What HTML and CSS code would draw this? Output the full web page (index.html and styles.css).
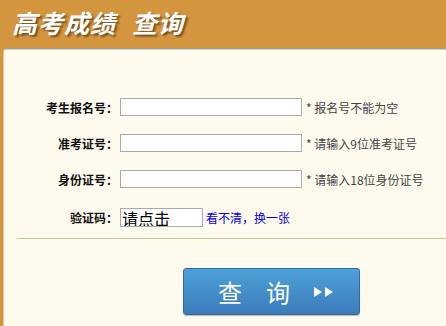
FILE: index.html
```html
<!DOCTYPE html>
<html lang="zh-CN">
<head>
    <meta charset="UTF-8">
    <title>高考成绩查询</title>
    <link rel="stylesheet" href="styles.css">
</head>
<body>
    <div class="header">
        <h1 class="title"><span>高考成绩</span><span class="title-query">查询</span></h1>
    </div>

    <div class="panel">
        <div class="row first">
            <label class="label">考生报名号：</label>
            <input type="text" class="field">
            <span class="hint">* 报名号不能为空</span>
        </div>
        <div class="row">
            <label class="label">准考证号：</label>
            <input type="text" class="field">
            <span class="hint">* 请输入9位准考证号</span>
        </div>
        <div class="row">
            <label class="label">身份证号：</label>
            <input type="text" class="field">
            <span class="hint">* 请输入18位身份证号</span>
        </div>
        <div class="row captcha">
            <label class="label">验证码：</label>
            <input type="text" class="code" value="请点击">
            <a href="#" class="refresh">看不清，换一张</a>
        </div>

        <div class="divider"></div>

        <div class="actions">
            <button class="submit">
                <span class="submit-char">查</span>
                <span class="submit-char">询</span>
                <span class="arrows"><i></i><i></i></span>
            </button>
        </div>
    </div>
</body>
</html>
```

FILE: styles.css
```css
body {
    margin: 0;
    height: 100vh;
    background-color: #d4953f;
    font-family: "Noto Sans CJK SC", "Liberation Sans", sans-serif;
    display: flex;
    flex-direction: column;
    overflow: hidden;
}

.header {
    height: 48px;
    display: flex;
    align-items: center;
    padding-left: 12px;
}

.title {
    margin: -4px 0 0 0;
    color: #ffffff;
    font-size: 25px;
    font-weight: bold;
    font-style: italic;
    line-height: 1;
    letter-spacing: 1px;
    text-shadow: 2px 2px 2px rgba(60, 30, 0, 0.6);
    display: flex;
}

.title-query {
    margin-left: 16px;
}

.panel {
    flex: 1;
    margin-left: 3px;
    background-color: #fefbee;
    border-top: 1px solid #a39c90;
    border-left: 1px solid #e0c89a;
    border-top-left-radius: 4px;
    box-shadow: inset 0 1px 0 #d8d4c8;
}

.row {
    display: flex;
    align-items: center;
    height: 36px;
}

.row.first {
    margin-top: 40px;
}

.row.captcha {
    height: 39px;
    margin-top: 1px;
}

.label {
    width: 114px;
    text-align: right;
    font-size: 12px;
    font-weight: bold;
    color: #111111;
}

.field {
    box-sizing: border-box;
    width: 182px;
    height: 18px;
    margin: 0 0 0 2px;
    padding: 0 3px;
    border: 1px solid #ababab;
    background-color: #ffffff;
    outline: none;
}

.hint {
    margin-left: 4px;
    font-size: 12px;
    color: #444444;
}

.code {
    box-sizing: border-box;
    width: 83px;
    height: 19px;
    margin: 0 0 0 2px;
    padding: 0 1px;
    border: 1px solid #ababab;
    background-color: #ffffff;
    font-family: "Noto Sans CJK SC", sans-serif;
    font-size: 16px;
    line-height: 17px;
    color: #000000;
    outline: none;
}

.refresh {
    margin-left: 3px;
    font-size: 12px;
    color: #0000ee;
    text-decoration: none;
}

.divider {
    margin: 1px 0 0 13px;
    border-top: 1px solid #cfc49a;
}

.actions {
    padding: 29px 0 0 179px;
}

.submit {
    width: 177px;
    height: 47px;
    border: 1px solid #2f6aa0;
    border-radius: 3px;
    background: linear-gradient(#4ea1da, #3a7cb9);
    box-shadow: 0 1px 1px rgba(0, 0, 0, 0.25);
    color: #ffffff;
    display: flex;
    align-items: center;
    padding: 0 0 0 34px;
    cursor: pointer;
}

.submit-char {
    font-family: "Noto Sans CJK SC", sans-serif;
    font-size: 24px;
    line-height: 1;
    margin-right: 24px;
}

.arrows {
    display: flex;
    gap: 3px;
}

.arrows i {
    width: 0;
    height: 0;
    border-top: 5px solid transparent;
    border-bottom: 5px solid transparent;
    border-left: 8px solid #ffffff;
}
```
